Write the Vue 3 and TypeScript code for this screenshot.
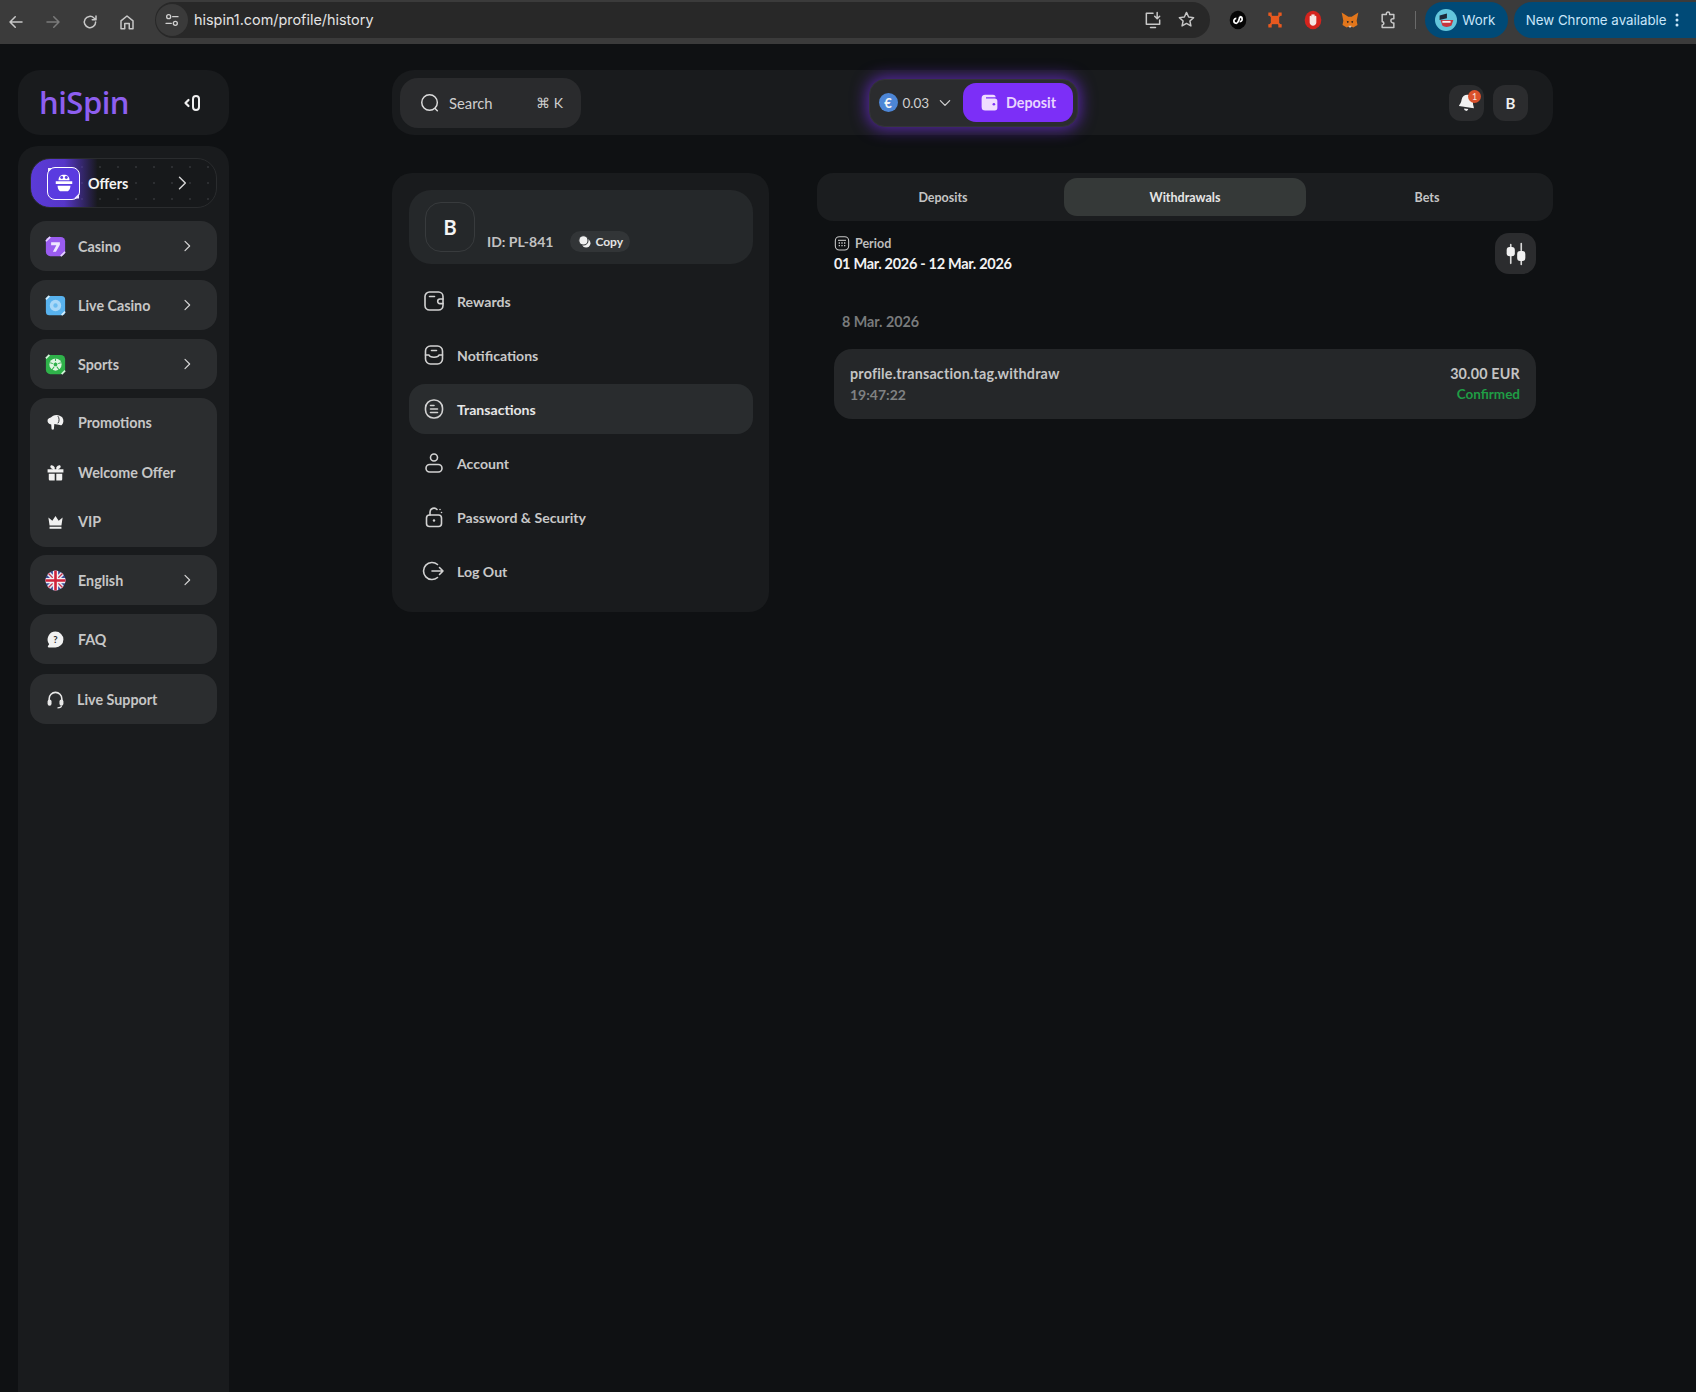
<script setup lang="ts">
type NavItem = { label: string; icon: string; arrow?: boolean }

const chevron = '<path d="M9 5l7 7-7 7" fill="none" stroke="currentColor" stroke-width="1.7" stroke-linecap="round" stroke-linejoin="round"/>'

const sideIcons: Record<string, string> = {
  casino: '<rect x="1" y="1" width="22" height="22" rx="5" fill="#9a5cf0"/><path d="M1 6l5-5M23 18l-5 5" stroke="#e6d6ff" stroke-width="2"/><path d="M7 7h10v3l-4.500 8h-3.500l4-7.500h-6z" fill="#efe6ff"/>',
  live: '<rect x="1" y="1" width="22" height="22" rx="4" fill="#58b2ee"/><path d="M1 5l4-4M23 19l-4 4" stroke="#d6eefc" stroke-width="2"/><circle cx="12" cy="12" r="6.500" fill="#a9d8f8"/><circle cx="12" cy="12" r="2.500" fill="#6cbcf0"/>',
  sports: '<rect x="1" y="1" width="22" height="22" rx="5" fill="#2fb24a"/><path d="M1 5l4-4M23 19l-4 4" stroke="#d6f5dc" stroke-width="2"/><circle cx="12" cy="12" r="7" fill="#dff5e2"/><path d="M12 9.500l2.400 1.700-.9 2.800h-3l-.9-2.800z" fill="#2fb24a"/><path d="M12 5v3M6 10l3 1M18 10l-3 1M8 18l2.500-3.500M16 18l-2.500-3.500" stroke="#2fb24a" stroke-width="1.200"/>',
  promo: '<path d="M9 3.500c3.500-2 9-1 11.500 2 2.200 2.800 2 7.500-.5 9.500-1 .8-2.500.2-4-.2l-5.500-.8-.5 6c-.2 1.500-2.800 1.500-3 0l-.4-5.500C3.500 14 1.500 11.500 2 9c.4-2.500 3.500-2.500 7-5.500z" fill="#f1f1f1"/><path d="M15 4c2 2 2 7 0 9" stroke="#2b2d2f" stroke-width="1.200" fill="none"/>',
  gift: '<path d="M2 8h20v4H2zM3.500 13.500h7.500V22H5a1.500 1.500 0 0 1-1.500-1.500zM13 13.500h7.500v7a1.500 1.500 0 0 1-1.500 1.500h-6zM11 8V5.500C9 2 5 2 5.500 5c.3 2 3 3 5.500 3zM13 8V5.500C15 2 19 2 18.500 5c-.3 2-3 3-5.500 3z" fill="#f1f1f1"/>',
  vip: '<path d="M3 7l5 4 4-6 4 6 5-4-1.500 10h-15zM4.500 18.500h15V21h-15z" fill="#f1f1f1"/>',
  flag: '<defs><clipPath id="flagclip"><circle cx="12" cy="12" r="11.500"/></clipPath></defs><g clip-path="url(#flagclip)"><rect width="24" height="24" fill="#3d4f9c"/><path d="M0 0l24 24M24 0L0 24" stroke="#e9e9f2" stroke-width="5"/><path d="M0 0l24 24M24 0L0 24" stroke="#c8324a" stroke-width="1.500"/><path d="M12 0v24M0 12h24" stroke="#f1f1f6" stroke-width="6"/><path d="M12 0v24M0 12h24" stroke="#d0243c" stroke-width="3"/></g>',
  faq: '<path d="M12 2a10 10 0 0 1 0 20H3.500c-1 0-1.500-1-1-1.800L4 18A10 10 0 0 1 12 2z" fill="#f1f1f1"/><text x="12" y="16.500" font-size="12" font-weight="700" font-family="Lato, sans-serif" text-anchor="middle" fill="#2c2d2f">?</text>',
  support: '<path d="M4 14v-3a8 8 0 0 1 16 0v3" fill="none" stroke="#e8e8e8" stroke-width="2"/><rect x="2" y="12" width="5" height="8" rx="2.500" fill="#e8e8e8"/><rect x="17" y="12" width="5" height="8" rx="2.500" fill="#e8e8e8"/><path d="M19.500 20c0 2-2 2.500-5 2.500" fill="none" stroke="#e8e8e8" stroke-width="1.500"/>',
}

const sideTop: NavItem[] = [
  { label: 'Casino', icon: 'casino', arrow: true },
  { label: 'Live Casino', icon: 'live', arrow: true },
  { label: 'Sports', icon: 'sports', arrow: true },
]
const sideGroup: NavItem[] = [
  { label: 'Promotions', icon: 'promo' },
  { label: 'Welcome Offer', icon: 'gift' },
  { label: 'VIP', icon: 'vip' },
]

const lineAttrs = 'fill="none" stroke="#d2d2d2" stroke-width="1.600" stroke-linecap="round" stroke-linejoin="round"'
const profileNav = [
  { label: 'Rewards', icon: `<path d="M3 7.500A4.500 4.500 0 0 1 7.500 3h9A4.500 4.500 0 0 1 21 7.500v9a4.500 4.500 0 0 1-4.500 4.500h-9A4.500 4.500 0 0 1 3 16.500z" ${lineAttrs}/><path d="M7.500 7.500h5M21 10h-3a2.300 2.300 0 0 0 0 4.600h3" ${lineAttrs}/>` },
  { label: 'Notifications', icon: `<rect x="3.500" y="3" width="17" height="18" rx="5" ${lineAttrs}/><path d="M9.500 7.500h5M3.500 12h3.500c1 3 9 3 10 0h3.500" ${lineAttrs}/>` },
  { label: 'Transactions', icon: `<rect x="3.500" y="3" width="17" height="18" rx="8" ${lineAttrs}/><path d="M8.500 8.500h3.500M8.500 12h7M8.500 15.500h7" ${lineAttrs}/>`, active: true },
  { label: 'Account', icon: `<circle cx="12" cy="6.500" r="3.500" ${lineAttrs}/><rect x="4" y="13.500" width="16" height="7.500" rx="3.700" ${lineAttrs}/>` },
  { label: 'Password & Security', icon: `<rect x="4.500" y="10" width="15" height="11.500" rx="3" ${lineAttrs}/><path d="M8 10V7a4 4 0 0 1 7-2.500M18 4.500h.01M19.500 7.500h.01" ${lineAttrs}/><circle cx="12" cy="15.500" r="1.200" fill="#d2d2d2"/>` },
  { label: 'Log Out', icon: `<path d="M15.500 5.500A8.500 8.500 0 1 0 15.500 18.500" ${lineAttrs}/><path d="M10 12h11M17.500 8.500L21 12l-3.500 3.500" ${lineAttrs}/>` },
]

const tabs = ['Deposits', 'Withdrawals', 'Bets']
</script>

<template>
  <div class="page">
    <header class="chrome">
      <div class="chrome-nav">
        <svg width="18" height="18" viewBox="0 0 24 24" fill="none" stroke="#c8c8c8" stroke-width="2" stroke-linecap="round" stroke-linejoin="round"><path d="M20 12H4M11 5l-7 7 7 7"/></svg>
        <svg width="18" height="18" viewBox="0 0 24 24" fill="none" stroke="#7b7b7b" stroke-width="2" stroke-linecap="round" stroke-linejoin="round"><path d="M4 12h16M13 5l7 7-7 7"/></svg>
        <svg width="18" height="18" viewBox="0 0 24 24" fill="none" stroke="#c8c8c8" stroke-width="2" stroke-linecap="round" stroke-linejoin="round"><path d="M19.500 12a7.500 7.500 0 1 1-2.200-5.300L20 9M20 4v5h-5"/></svg>
        <svg width="18" height="18" viewBox="0 0 24 24" fill="none" stroke="#c8c8c8" stroke-width="2" stroke-linejoin="round"><path d="M4 10.500L12 4l8 6.500V21h-5v-7H9v7H4z"/></svg>
      </div>
      <div class="address">
        <span class="tune">
          <svg width="16" height="16" viewBox="0 0 24 24" fill="none" stroke="#d0d0d0" stroke-width="2" stroke-linecap="round"><circle cx="7" cy="7" r="3"/><path d="M13 7h8M3 17h8"/><circle cx="17" cy="17" r="3"/></svg>
        </span>
        <span class="url">hispin1.com/profile/history</span>
        <svg class="addr-install" width="20" height="20" viewBox="0 0 24 24" fill="none" stroke="#c8c8c8" stroke-width="1.800" stroke-linejoin="round" stroke-linecap="round"><path d="M12 4H4v13h16v-5M9 21h6M17 3v7M14 7.500l3 3 3-3"/></svg>
        <svg width="19" height="19" viewBox="0 0 24 24" fill="none" stroke="#c8c8c8" stroke-width="1.800" stroke-linejoin="round"><path d="M12 3l2.700 5.900 6.300.7-4.700 4.300 1.300 6.300L12 17l-5.600 3.200 1.300-6.300L3 9.600l6.300-.7z"/></svg>
      </div>
      <div class="extensions">
        <svg width="20" height="20" viewBox="0 0 24 24"><ellipse cx="12" cy="12" rx="10" ry="11" fill="#050505"/><path d="M14 8a3 3 0 0 1 3 3c0 2-2 3-3 3M10 16a3 3 0 0 1-3-3c0-2 2-3 3-3M10 16c2 0 4-6 4-8" fill="none" stroke="#fff" stroke-width="2"/></svg>
        <svg width="20" height="20" viewBox="0 0 24 24"><path d="M5 5l14 14M19 5L5 19" stroke="#e8591f" stroke-width="2"/><rect x="7" y="7" width="10" height="10" fill="#e8591f"/><g fill="#e8591f"><rect x="4" y="3" width="4" height="4"/><rect x="16" y="3" width="4" height="4"/><rect x="4" y="17" width="4" height="4"/><rect x="16" y="17" width="4" height="4"/></g></svg>
        <svg width="20" height="20" viewBox="0 0 24 24"><ellipse cx="12" cy="12" rx="10" ry="11" fill="#d4231d"/><path d="M8 12V8a1 1 0 0 1 2 0V6a1 1 0 0 1 2 0 1 1 0 0 1 2 0v2a1 1 0 0 1 2 0v7c0 2-2 4-4 4s-4-2-4-4z" fill="#f4e6e4"/></svg>
        <svg width="20" height="20" viewBox="0 0 24 24"><path d="M2 3l8 5h4l8-5-2 10 1 5-5 3-2-1h-4l-2 1-5-3 1-5z" fill="#e2761b"/><path d="M8 13l3 1-2 2zM16 13l-3 1 2 2z" fill="#2b2320"/><path d="M10 19h4l-1 2h-2z" fill="#d7c1b3"/></svg>
        <svg width="20" height="20" viewBox="0 0 24 24" fill="none" stroke="#c8c8c8" stroke-width="1.800" stroke-linejoin="round"><path d="M5 5.500h5V4.500a2 2 0 0 1 4 0v1h5v5h-1a2.500 2.500 0 0 0 0 5h1v5.500H5v-3a2 2 0 0 0 0-4z"/></svg>
        <i class="sep"></i>
        <span class="chrome-pill work">
          <svg width="22" height="22" viewBox="0 0 24 24"><circle cx="12" cy="12" r="12" fill="#63c6dc"/><path d="M6 12h14l-2 6c-3 2-8 2-10 0z" fill="#c8353d"/><path d="M5 7l8-2v5l-8 2z" fill="#1e2a38"/><path d="M8 13h9v2H8z" fill="#f3f3f3"/></svg>
          Work
        </span>
        <span class="chrome-pill update">
          New Chrome available
          <svg width="4" height="14" viewBox="0 0 4 14" fill="#c9e6fa"><circle cx="2" cy="2" r="1.500"/><circle cx="2" cy="7" r="1.500"/><circle cx="2" cy="12" r="1.500"/></svg>
        </span>
      </div>
    </header>

    <div class="body">
      <aside class="left">
        <div class="logo-card">
          <span class="logo">hiSpin</span>
          <svg width="20" height="20" viewBox="0 0 20 20" fill="none" stroke="#f0f0f0" stroke-linecap="round" stroke-linejoin="round"><path d="M5.500 7L2.500 10l3 3" stroke-width="2.200"/><rect x="10" y="3" width="6" height="14" rx="3" stroke-width="2"/></svg>
        </div>
        <nav class="sidebar">
          <div class="offers">
            <span class="offers-icon">
              <svg width="22" height="22" viewBox="0 0 24 24"><path d="M6 9c0-4 2.500-6 6-6s6 2 6 6z" fill="#fff"/><circle cx="9.500" cy="6" r="1.600" fill="#5a3be0"/><circle cx="14.500" cy="6" r="1.600" fill="#5a3be0"/><path d="M3 10h18v3H3zM5 15h14c0 3-1.500 6-3.500 6h-7C6.500 21 5 18 5 15z" fill="#fff"/></svg>
              <i class="notch tl"></i>
              <i class="notch br"></i>
            </span>
            <span class="offers-label">Offers</span>
            <svg class="arrow offers-arrow" width="20" height="20" viewBox="0 0 24 24" v-html="chevron"></svg>
          </div>

          <a v-for="item in sideTop" :key="item.label" class="side-item">
            <svg class="side-icon" width="21" height="21" viewBox="0 0 24 24" v-html="sideIcons[item.icon]"></svg>
            <span>{{ item.label }}</span>
            <svg class="arrow" width="16" height="16" viewBox="0 0 24 24" v-html="chevron"></svg>
          </a>

          <div class="side-group">
            <a v-for="item in sideGroup" :key="item.label" class="side-item">
              <svg class="side-icon small" width="19" height="19" viewBox="0 0 24 24" v-html="sideIcons[item.icon]"></svg>
              <span>{{ item.label }}</span>
            </a>
          </div>

          <a class="side-item">
            <svg class="side-icon" width="21" height="21" viewBox="0 0 24 24" v-html="sideIcons.flag"></svg>
            <span>English</span>
            <svg class="arrow" width="16" height="16" viewBox="0 0 24 24" v-html="chevron"></svg>
          </a>
          <a class="side-item">
            <svg class="side-icon small" width="19" height="19" viewBox="0 0 24 24" v-html="sideIcons.faq"></svg>
            <span>FAQ</span>
          </a>
          <a class="side-item support">
            <svg class="side-icon small" width="19" height="19" viewBox="0 0 24 24" v-html="sideIcons.support"></svg>
            <span>Live Support</span>
          </a>
        </nav>
      </aside>

      <main class="main">
        <div class="topbar">
          <div class="search">
            <svg width="22" height="22" viewBox="0 0 24 24" fill="none" stroke="#dcdcdc" stroke-width="1.600" stroke-linecap="round"><circle cx="11.500" cy="11.500" r="8.500"/><path d="M17.500 18l2.500 2.500"/></svg>
            <span>Search</span>
            <span class="kbd">⌘ K</span>
          </div>
          <div class="wallet">
            <span class="coin">€</span>
            <span class="amount">0.03</span>
            <svg width="14" height="14" viewBox="0 0 24 24" fill="none" stroke="#cfcfcf" stroke-width="2.200" stroke-linecap="round" stroke-linejoin="round"><path d="M4 8l8 8 8-8"/></svg>
            <button class="deposit">
              <svg width="21" height="21" viewBox="0 0 24 24"><path d="M3 7a4 4 0 0 1 4-4h9a3 3 0 0 1 3 3H8v1.500h10a3 3 0 0 1 3 3V18a3 3 0 0 1-3 3H7a4 4 0 0 1-4-4z" fill="#f0dcff"/><circle cx="17" cy="14" r="1.500" fill="#7c2ff7"/></svg>
              Deposit
            </button>
          </div>
          <div class="top-right">
            <span class="square-btn bell">
              <svg width="20" height="20" viewBox="0 0 24 24" fill="#f1f1f1"><path d="M12 2a7 7 0 0 1 7 7c0 5 2 6 2 8H3c0-2 2-3 2-8a7 7 0 0 1 7-7zM9.500 19h5a2.500 2.500 0 0 1-5 0z" transform="rotate(8 12 12)"/></svg>
              <i class="badge">1</i>
            </span>
            <span class="square-btn">B</span>
          </div>
        </div>

        <div class="content">
          <section class="profile-panel">
            <div class="profile-card">
              <div class="avatar">B</div>
              <span class="user-id">ID: PL-841</span>
              <span class="copy">
                <svg width="13" height="13" viewBox="0 0 24 24" fill="#f0f0f0"><circle cx="15" cy="15" r="8"/><circle cx="10" cy="10" r="8.500" stroke="#323537" stroke-width="2"/></svg>
                Copy
              </span>
            </div>
            <a v-for="item in profileNav" :key="item.label" class="profile-row" :class="{ active: item.active }">
              <svg width="24" height="24" viewBox="0 0 24 24" v-html="item.icon"></svg>
              <span>{{ item.label }}</span>
            </a>
          </section>

          <section class="history">
            <div class="tabs">
              <span v-for="tab in tabs" :key="tab" class="tab" :class="{ active: tab === 'Withdrawals' }">{{ tab }}</span>
            </div>
            <div class="period-row">
              <div>
                <div class="period-label">
                  <svg width="16" height="16" viewBox="0 0 24 24" fill="none" stroke="#c9c9c9" stroke-width="1.600"><rect x="2" y="2.500" width="20" height="20" rx="6"/><path d="M6 8h12"/><path d="M7 12h2M11 12h2M15 12h2M7 16h2M11 16h2M15 16h2" stroke-width="2"/></svg>
                  Period
                </div>
                <div class="period-value">01 Mar. 2026 - 12 Mar. 2026</div>
              </div>
              <span class="filter-btn">
                <svg width="28" height="28" viewBox="0 0 24 24" fill="#f1f1f1" stroke="#d8d8d8" stroke-width="1.400" stroke-linecap="round"><path d="M7.500 4v2M7.500 14v6M16.500 3v6M16.500 18v3"/><rect x="4" y="6" width="7" height="8" rx="2.500" stroke="none"/><rect x="13" y="9.500" width="7" height="8.500" rx="2.500" stroke="none"/></svg>
              </span>
            </div>
            <div class="day">8 Mar. 2026</div>
            <div class="tx-card">
              <div>
                <div class="tx-title">profile.transaction.tag.withdraw</div>
                <div class="tx-time">19:47:22</div>
              </div>
              <div class="tx-right">
                <div class="tx-title">30.00 EUR</div>
                <div class="tx-status">Confirmed</div>
              </div>
            </div>
          </section>
        </div>
      </main>
    </div>
  </div>
</template>

<style>
html,
body {
  margin: 0;
  background: #0f1113;
}
</style>

<style scoped>
.page {
  min-height: 1392px;
  display: flex;
  flex-direction: column;
  background: #0f1113;
  color: #d4d4d4;
  font-family: Lato, "Noto Sans", sans-serif;
  font-size: 14.3px;
  font-weight: 700;
  overflow: hidden;
}

/* browser toolbar */
.chrome {
  height: 44px;
  flex: none;
  display: flex;
  align-items: center;
  background: #3b3b3b;
  font-family: Inter, sans-serif;
  font-weight: 400;
}
.chrome-nav {
  width: 155px;
  flex: none;
  box-sizing: border-box;
  display: flex;
  gap: 19px;
  padding-left: 7px;
}
.address {
  width: 1055px;
  height: 36px;
  margin-top: -5px;
  flex: none;
  display: flex;
  align-items: center;
  background: #282828;
  border-radius: 18px;
  box-sizing: border-box;
  padding-right: 14px;
  gap: 14px;
}
.tune {
  width: 32px;
  height: 32px;
  margin-left: 1px;
  border-radius: 50%;
  background: #3a3a3a;
  display: flex;
  align-items: center;
  justify-content: center;
}
.url {
  margin-left: -8px;
  font-size: 14.400px;
  color: #e3e3e3;
  flex: 1;
}
.extensions {
  flex: 1;
  display: flex;
  align-items: center;
  gap: 17.400px;
  margin-left: 18px;
  margin-top: -5px;
}
.sep {
  width: 1px;
  height: 18px;
  background: #6a6a6a;
}
.chrome-pill {
  height: 36px;
  display: flex;
  align-items: center;
  border-radius: 18px;
  background: #004a77;
  color: #c9e6fa;
  font-size: 13.300px;
}
.work {
  width: 83px;
  box-sizing: border-box;
  padding-left: 10px;
  gap: 5px;
  margin-left: -8px;
}
.update {
  flex: 1;
  padding-left: 12px;
  gap: 8px;
  margin-left: -12px;
  border-radius: 18px 0 0 18px;
}

.body {
  flex: 1;
  display: flex;
  align-items: stretch;
}

/* sidebar */
.left {
  width: 211px;
  margin-left: 18px;
  padding-top: 26px;
  display: flex;
  flex-direction: column;
  flex: none;
}
.logo-card {
  height: 65px;
  background: #191b1d;
  border-radius: 22px;
  display: flex;
  align-items: center;
  justify-content: space-between;
  padding: 0 26px 0 21px;
  margin-bottom: 11px;
}
.logo {
  color: #8e5ff0;
  font-size: 31px;
  font-family: "Open Sans", sans-serif;
  font-weight: 600;
  letter-spacing: -0.5px;
  line-height: 1;
}
.sidebar {
  flex: 1;
  background: #191b1d;
  border-radius: 20px 20px 0 0;
  padding: 12px;
  display: flex;
  flex-direction: column;
  gap: 9px;
}
.offers {
  height: 50px;
  box-sizing: border-box;
  border: 1px solid #2a2c2e;
  border-radius: 20px;
  display: flex;
  align-items: center;
  padding-left: 16px;
  margin-bottom: 4px;
  background:
    linear-gradient(90deg, #5b3bd8 0%, #5636c8 18%, rgba(70, 45, 170, 0) 36%),
    radial-gradient(circle, #2c2e31 1px, transparent 1.500px) 6px 0 / 18px 16px,
    #17191b;
  color: #f4f4f4;
}
.offers-icon {
  position: relative;
  width: 33px;
  height: 33px;
  box-sizing: border-box;
  border: 1.500px solid #fff;
  border-radius: 8px;
  background: #5a3be0;
  display: flex;
  align-items: center;
  justify-content: center;
}
.notch {
  position: absolute;
  width: 5px;
  height: 5px;
  background: #f0eaff;
}
.notch.tl {
  top: 0;
  left: 0;
  clip-path: polygon(0 0, 100% 0, 0 100%);
}
.notch.br {
  right: 0;
  bottom: 0;
  clip-path: polygon(100% 0, 100% 100%, 0 100%);
}
.offers-label {
  margin-left: 8px;
}
.offers-arrow {
  margin-right: 24px;
}
.side-item {
  height: 50px;
  flex: none;
  background: #2b2d2f;
  border-radius: 16px;
  display: flex;
  align-items: center;
  padding: 0 22px 0 15px;
  color: #c6c6c6;
}
.side-icon {
  margin-right: 12px;
  flex: none;
}
.side-icon.small {
  margin-left: 1px;
  margin-right: 13px;
}
.support {
  margin-top: 1px;
}
.support .side-icon.small {
  margin-right: 12px;
}
.arrow {
  margin-left: auto;
  color: #d8d8d8;
}
.side-group {
  height: 149px;
  margin-bottom: -1px;
  background: #2b2d2f;
  border-radius: 16px;
  flex: none;
}
.side-group .side-item {
  background: none;
  height: 49.600px;
}

/* top bar */
.main {
  width: 1161px;
  margin-left: 163px;
  padding-top: 26px;
  flex: none;
}
.topbar {
  height: 65px;
  box-sizing: border-box;
  padding: 0 25px 0 8px;
  background: #191b1d;
  border-radius: 22px;
  display: grid;
  grid-template-columns: 1fr auto 1fr;
  align-items: center;
}
.search {
  width: 181px;
  height: 50px;
  box-sizing: border-box;
  background: #2a2b2d;
  border-radius: 18px;
  display: flex;
  align-items: center;
  padding: 0 18px 0 19px;
  gap: 8px;
  color: #cfcfcf;
  font-size: 14.800px;
  font-weight: 400;
}
.kbd {
  margin-left: auto;
  font-size: 14px;
}
.wallet {
  width: 209px;
  height: 48px;
  box-sizing: border-box;
  border: 1px solid #333537;
  background: #2b2c2e;
  border-radius: 16px;
  box-shadow: 0 0 16px 2px rgba(124, 47, 247, 0.65);
  display: flex;
  align-items: center;
  padding: 0 4px 0 9px;
  margin-left: 18px;
}
.coin {
  width: 19px;
  height: 19px;
  border-radius: 50%;
  background: #4d86d6;
  color: #f4f4f4;
  font-size: 13px;
  display: flex;
  align-items: center;
  justify-content: center;
  margin-right: 5px;
}
.amount {
  font-size: 13.500px;
  font-weight: 400;
  color: #d0d0d0;
  margin-right: 9px;
}
.deposit {
  margin-left: auto;
  width: 110px;
  height: 39px;
  border: none;
  border-radius: 13px;
  background: #7c2ff7;
  color: #e9d4ff;
  font: inherit;
  display: flex;
  align-items: center;
  justify-content: center;
  gap: 6px;
}
.top-right {
  display: flex;
  justify-content: flex-end;
  gap: 9px;
}
.square-btn {
  position: relative;
  width: 35px;
  height: 36px;
  border-radius: 12px;
  background: #2b2c2e;
  color: #f0f0f0;
  display: flex;
  align-items: center;
  justify-content: center;
  font-size: 15px;
}
.badge {
  position: absolute;
  top: 5px;
  right: 3px;
  width: 13px;
  height: 13px;
  border-radius: 50%;
  background: #d9512c;
  color: #fbe4dc;
  font-size: 9px;
  font-style: normal;
  font-weight: 400;
  display: flex;
  align-items: center;
  justify-content: center;
}

/* content */
.content {
  display: flex;
  gap: 48px;
  margin-top: 38px;
  align-items: flex-start;
}
.profile-panel {
  width: 377px;
  flex: none;
  box-sizing: border-box;
  background: #191b1d;
  border-radius: 20px;
  padding: 17px 16px 16px 17px;
  display: flex;
  flex-direction: column;
  gap: 4px;
}
.profile-card {
  height: 74px;
  box-sizing: border-box;
  background: #25282a;
  border-radius: 22px;
  padding: 12px 16px;
  display: flex;
  align-items: flex-end;
  margin-bottom: 8px;
}
.avatar {
  width: 50px;
  height: 50px;
  box-sizing: border-box;
  border: 1.500px solid #383b3d;
  border-radius: 16px;
  display: flex;
  align-items: center;
  justify-content: center;
  color: #f4f4f4;
  font-size: 20px;
  margin-right: 12px;
}
.user-id {
  font-size: 14px;
  color: #c2c2c2;
  margin-right: 17px;
  line-height: 20px;
}
.copy {
  height: 21px;
  padding: 0 7px 0 8px;
  border-radius: 11px;
  background: #323537;
  display: flex;
  align-items: center;
  gap: 4px;
  font-size: 12px;
  color: #e4e4e4;
}
.profile-row {
  height: 50px;
  border-radius: 16px;
  display: flex;
  align-items: center;
  padding-left: 13px;
  gap: 11px;
  color: #c8c8c8;
  font-size: 14.100px;
}
.profile-row.active {
  background: #292c2e;
  color: #e6e6e6;
}

.history {
  width: 736px;
  flex: none;
}
.tabs {
  height: 48px;
  box-sizing: border-box;
  padding: 5px;
  background: #1b1d1f;
  border-radius: 16px;
  display: grid;
  grid-template-columns: repeat(3, 1fr);
}
.tab {
  display: flex;
  align-items: center;
  justify-content: center;
  border-radius: 13px;
  font-size: 12.500px;
  color: #c4c4c4;
}
.tab.active {
  background: #353938;
  color: #e6e6e6;
}
.period-row {
  display: flex;
  justify-content: space-between;
  align-items: flex-start;
  padding: 12px 17px 0;
}
.period-label {
  display: flex;
  align-items: center;
  gap: 5px;
  font-size: 12.500px;
  color: #bdbdbd;
  height: 20px;
}
.period-value {
  margin-top: 1px;
  font-size: 14.500px;
  letter-spacing: -0.3px;
  color: #f2f2f2;
  line-height: 20px;
}
.filter-btn {
  width: 41px;
  height: 41px;
  background: #2b2c2e;
  border-radius: 14px;
  display: flex;
  align-items: center;
  justify-content: center;
}
.day {
  margin: 38px 0 17px 25px;
  line-height: 20px;
  color: #797b7c;
}
.tx-card {
  margin: 0 17px;
  height: 70px;
  box-sizing: border-box;
  background: #252729;
  border-radius: 18px;
  padding: 0 16px;
  display: flex;
  align-items: center;
  justify-content: space-between;
}
.tx-title {
  line-height: 20px;
  color: #c4c4c4;
  letter-spacing: 0.2px;
}
.tx-time {
  margin-top: 1px;
  line-height: 20px;
  font-size: 14px;
  color: #7f8182;
}
.tx-right {
  text-align: right;
}
.tx-status {
  line-height: 20px;
  font-size: 13.500px;
  color: #1f9d45;
}
</style>
